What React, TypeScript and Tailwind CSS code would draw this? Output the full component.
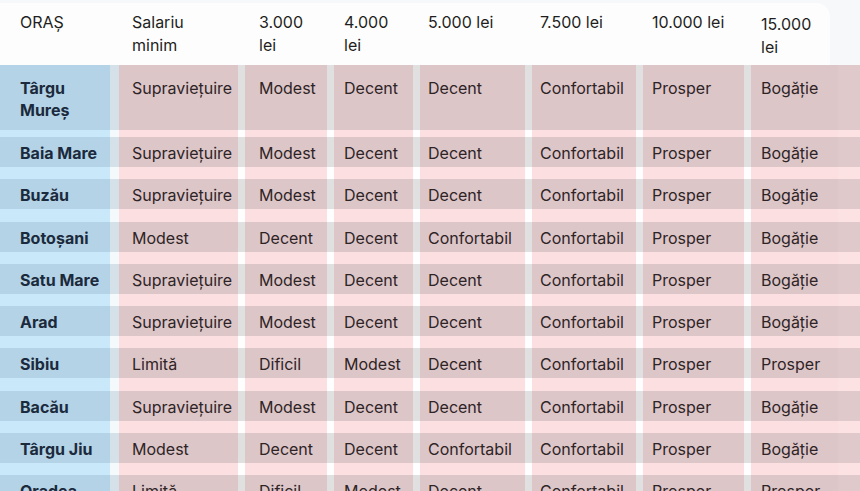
import React from "react";

type Col = { w: string; pad: string };

const cols: Col[] = [
  { w: "w-[119px]", pad: "pl-[20px]" },
  { w: "w-[126px]", pad: "pl-[13px]" },
  { w: "w-[89px]", pad: "pl-[14px]" },
  { w: "w-[86px]", pad: "pl-[10px]" },
  { w: "w-[112px]", pad: "pl-[8px]" },
  { w: "w-[111px]", pad: "pl-[8px]" },
  { w: "w-[108px]", pad: "pl-[9px]" },
  { w: "w-[87px]", pad: "pl-[10px]" },
];

const headers: React.ReactNode[] = [
  "ORAȘ",
  <>Salariu<br />minim</>,
  <>3.000<br />lei</>,
  <>4.000<br />lei</>,
  "5.000 lei",
  "7.500 lei",
  "10.000 lei",
  <span className="block pt-[2px]">15.000<br />lei</span>,
];

const rows: { city: React.ReactNode; values: string[]; tall?: boolean }[] = [
  {
    city: <>Târgu<br />Mureș</>,
    values: ["Supraviețuire", "Modest", "Decent", "Decent", "Confortabil", "Prosper", "Bogăție"],
    tall: true,
  },
  { city: "Baia Mare", values: ["Supraviețuire", "Modest", "Decent", "Decent", "Confortabil", "Prosper", "Bogăție"] },
  { city: "Buzău", values: ["Supraviețuire", "Modest", "Decent", "Decent", "Confortabil", "Prosper", "Bogăție"] },
  { city: "Botoșani", values: ["Modest", "Decent", "Decent", "Confortabil", "Confortabil", "Prosper", "Bogăție"] },
  { city: "Satu Mare", values: ["Supraviețuire", "Modest", "Decent", "Decent", "Confortabil", "Prosper", "Bogăție"] },
  { city: "Arad", values: ["Supraviețuire", "Modest", "Decent", "Decent", "Confortabil", "Prosper", "Bogăție"] },
  { city: "Sibiu", values: ["Limită", "Dificil", "Modest", "Decent", "Confortabil", "Prosper", "Prosper"] },
  { city: "Bacău", values: ["Supraviețuire", "Modest", "Decent", "Decent", "Confortabil", "Prosper", "Bogăție"] },
  { city: "Târgu Jiu", values: ["Modest", "Decent", "Decent", "Confortabil", "Confortabil", "Prosper", "Bogăție"] },
  { city: "Oradea", values: ["Limită", "Dificil", "Modest", "Decent", "Confortabil", "Prosper", "Prosper"] },
];

const Stripe = ({ h }: { h: string }) => (
  <div className={`flex ${h}`}>
    <div className="w-[110px] bg-[#c9e9fb]" />
    <div className="w-[9px] bg-[#f4f9fc]" />
    {cols.slice(1).map((c, i) => (
      <div
        key={i}
        className={`${c.w} bg-[#fbdfe1] ${i < 6 ? "border-r-[7px] border-[#fefefe]" : ""}`}
      />
    ))}
    <div className="flex-1 bg-[#fce2e3]" />
  </div>
);

export default function App() {
  return (
    <div
      className="w-[860px] h-[491px] overflow-hidden bg-[#f7f8fa] text-[16px]"
      style={{ fontFamily: "Inter, 'Noto Sans', sans-serif" }}
    >
      <div className="flex h-[65px]">
        <div className="flex w-[830px] rounded-tr-[14px] bg-[#fdfdfe] mt-[3px] -mb-[3px] text-[#1f1f21] leading-[23px]">
          {headers.map((h, i) => (
            <div key={i} className={`${cols[i].w} ${cols[i].pad} pt-[8px] shrink-0`}>
              {h}
            </div>
          ))}
        </div>
      </div>

      {rows.map((r, ri) => (
        <div key={ri}>
          <div className={`flex ${r.tall ? "h-[65px]" : "h-[30px]"} leading-[22px]`}>
            <div
              className={`w-[110px] bg-[#b4d3e6] pl-[20px] font-bold text-[#1b2a3c] shrink-0 ${r.tall ? "pt-[12px]" : "pt-[5px]"}`}
            >
              {r.city}
            </div>
            <div className="w-[9px] bg-[#d5e1e9] shrink-0" />
            {r.values.map((v, i) => {
              const c = cols[i + 1];
              return (
                <div
                  key={i}
                  className={`${c.w} ${c.pad} shrink-0 bg-[#ddc6c8] text-[#2e2426] ${r.tall ? "pt-[12px]" : "pt-[5px]"} ${i < 6 ? "border-r-[7px] border-[#e1e0e1]" : ""}`}
                >
                  {v}
                </div>
              );
            })}
            <div className="flex-1 bg-[#e0c9cb]" />
          </div>
          <Stripe h={r.tall ? "h-[7px]" : "h-[12.25px]"} />
        </div>
      ))}
    </div>
  );
}
